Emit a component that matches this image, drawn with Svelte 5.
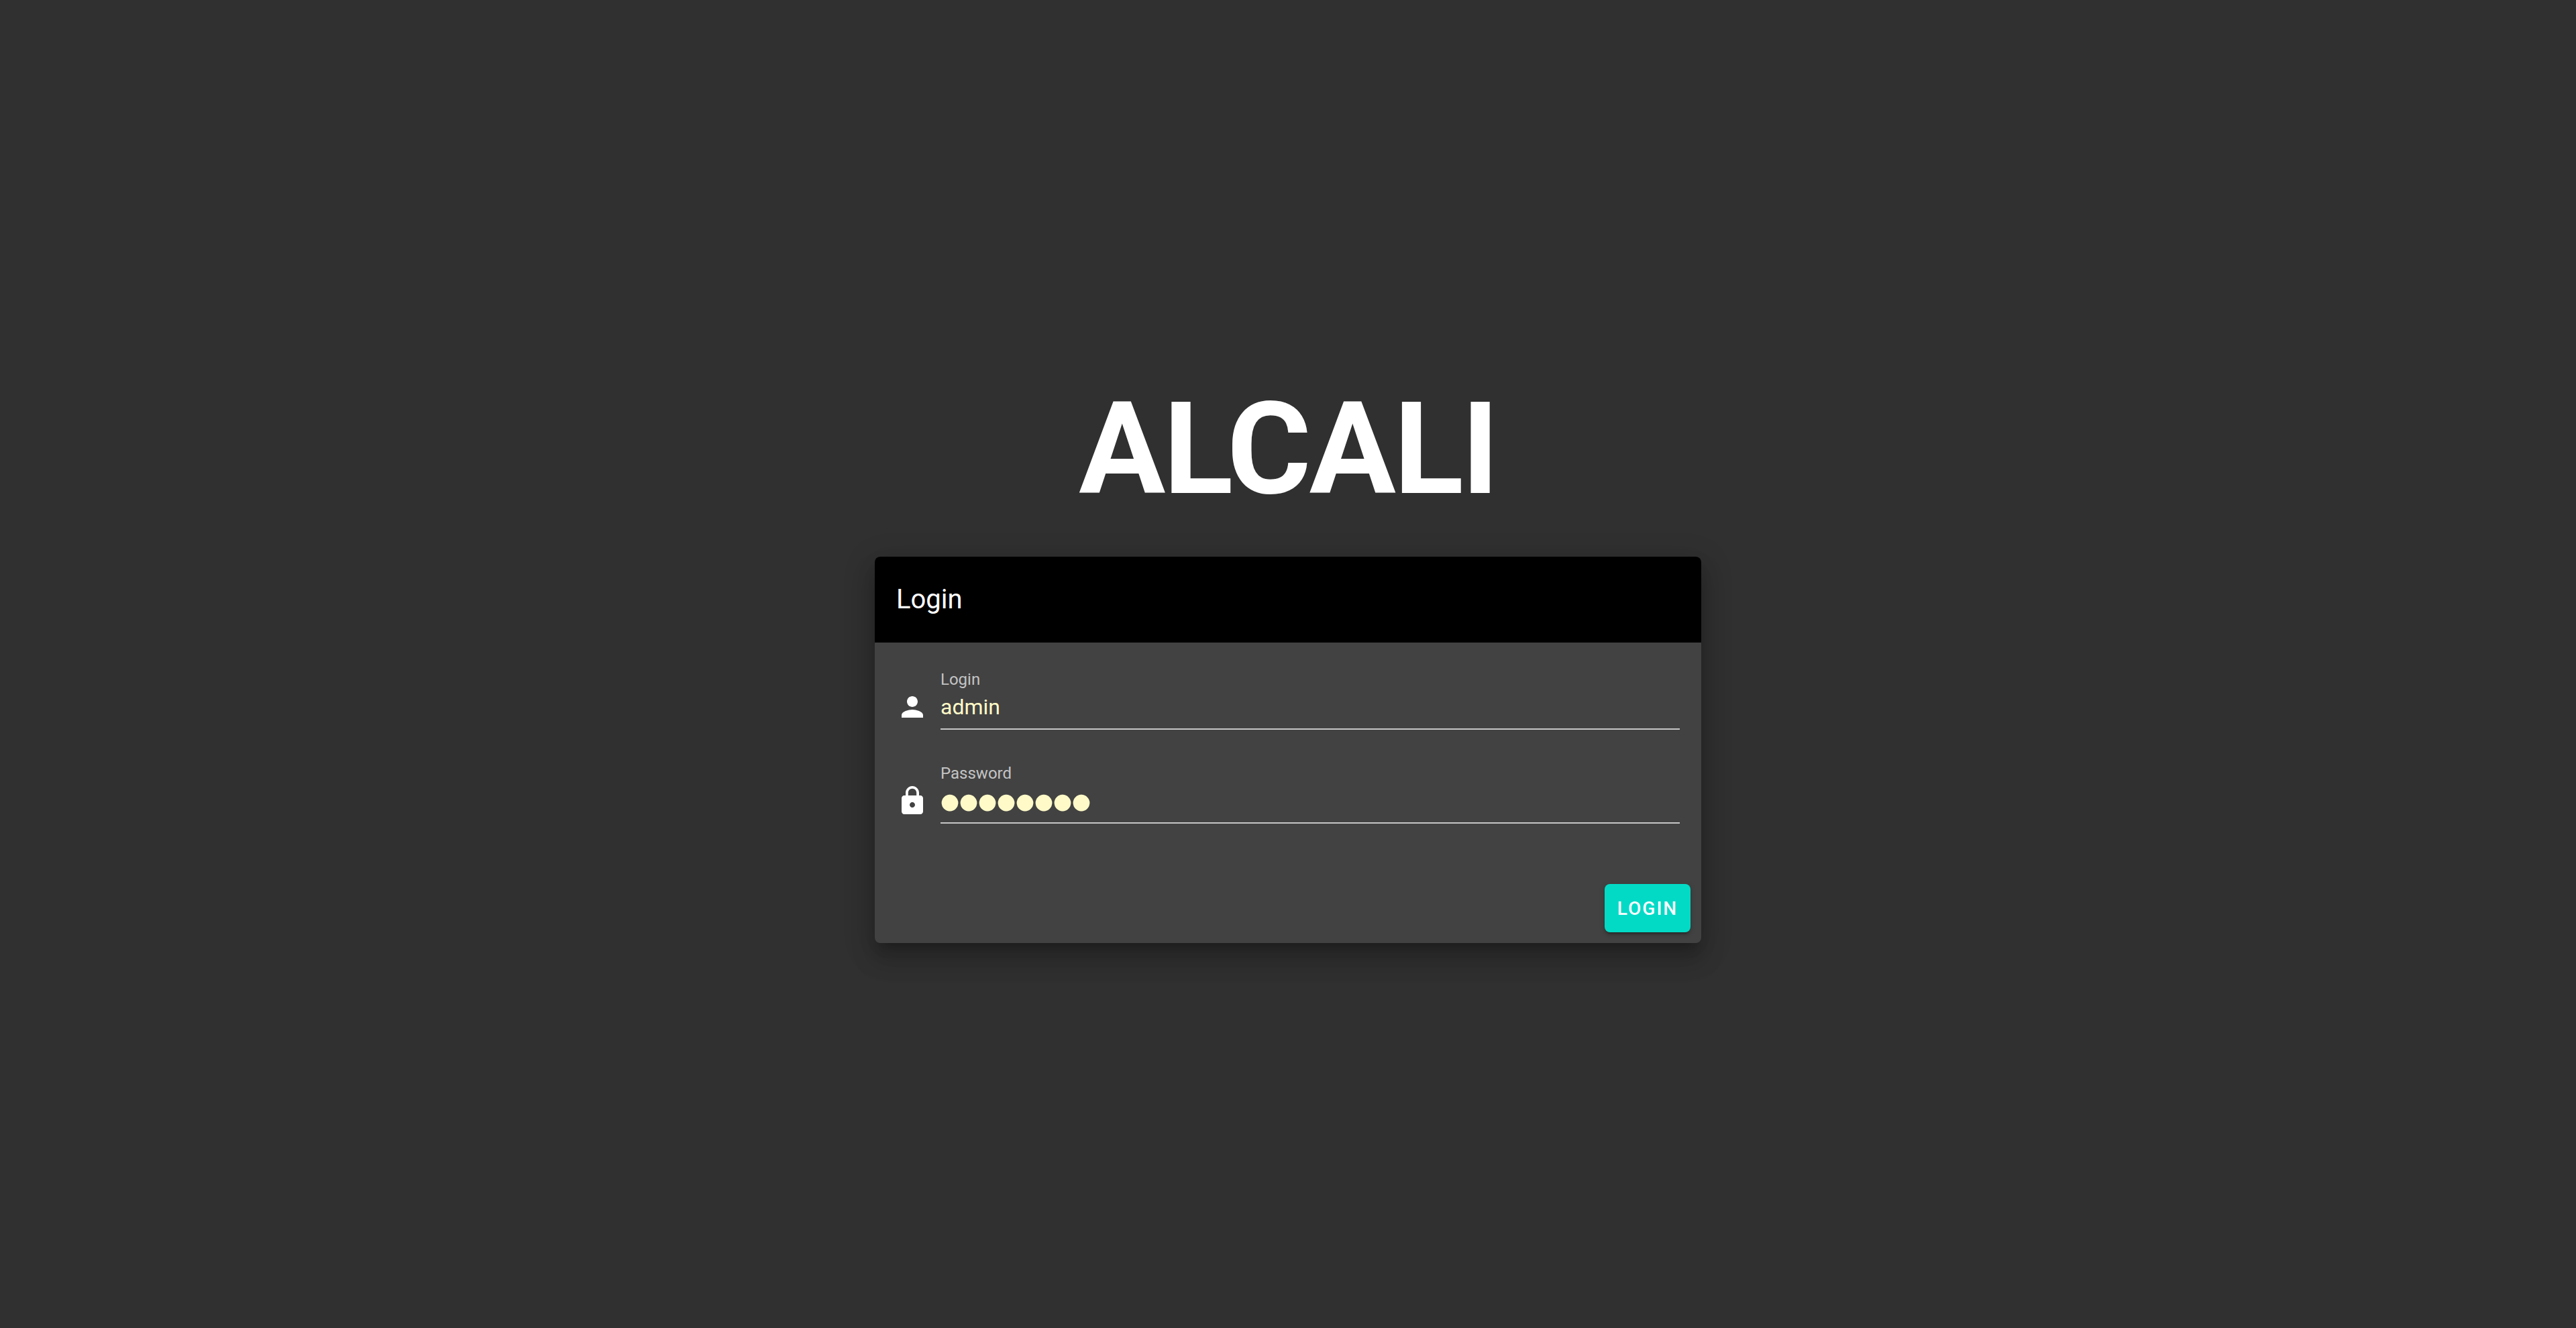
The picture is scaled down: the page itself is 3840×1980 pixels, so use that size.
<script>
  let login = $state('admin');
  let password = $state('password');
</script>

<main class="page">
  <div class="column">
    <h1 class="brand">ALCALI</h1>

    <form class="card" onsubmit={(event) => event.preventDefault()}>
      <header class="toolbar">
        <h2 class="toolbar-title">Login</h2>
      </header>

      <div class="fields">
        <div class="field">
          <svg class="icon" viewBox="0 0 24 24" aria-hidden="true">
            <path d="M12 12c2.21 0 4-1.79 4-4s-1.79-4-4-4-4 1.79-4 4 1.79 4 4 4zm0 2c-2.67 0-8 1.34-8 4v2h16v-2c0-2.66-5.33-4-8-4z" />
          </svg>
          <div class="control">
            <label class="label" for="login">Login</label>
            <input class="input" id="login" type="text" autocomplete="off" spellcheck="false" bind:value={login} />
          </div>
        </div>

        <div class="field">
          <svg class="icon" viewBox="0 0 24 24" aria-hidden="true">
            <path d="M18 8h-1V6c0-2.76-2.24-5-5-5S7 3.24 7 6v2H6c-1.1 0-2 .9-2 2v10c0 1.1.9 2 2 2h12c1.1 0 2-.9 2-2V10c0-1.1-.9-2-2-2zm-6 9c-1.1 0-2-.9-2-2s.9-2 2-2 2 .9 2 2-.9 2-2 2zm3.1-9H8.9V6c0-1.71 1.39-3.1 3.1-3.1 1.71 0 3.1 1.39 3.1 3.1v2z" />
          </svg>
          <div class="control">
            <label class="label" for="password">Password</label>
            <input class="input secret" id="password" type="password" autocomplete="off" bind:value={password} />
          </div>
        </div>
      </div>

      <footer class="actions">
        <button class="submit" type="submit">LOGIN</button>
      </footer>
    </form>
  </div>
</main>

<style>
  :global(body) {
    background: #303030;
  }

  .page {
    box-sizing: border-box;
    min-height: 100vh;
    display: flex;
    align-items: center;
    justify-content: center;
    font-family: Roboto, 'Liberation Sans', sans-serif;
    color: #fff;
    background: #303030;
  }

  .column {
    box-sizing: border-box;
    width: calc(100% / 3);
    min-width: 640px;
    padding: 0 24px;
    display: flex;
    flex-direction: column;
    gap: 64px;
  }

  .brand {
    margin: 0;
    font-size: 192px;
    line-height: 192px;
    font-weight: 700;
    letter-spacing: -3px;
    text-align: center;
  }

  .card {
    border-radius: 8px;
    background: #424242;
    box-shadow:
      0 14px 16px -8px rgba(0, 0, 0, 0.2),
      0 24px 34px 4px rgba(0, 0, 0, 0.14),
      0 10px 44px 8px rgba(0, 0, 0, 0.12);
  }

  .toolbar {
    display: flex;
    align-items: center;
    height: 128px;
    padding: 0 32px;
    border-radius: 8px 8px 0 0;
    background: #000;
  }

  .toolbar-title {
    margin: 0;
    font-size: 40px;
    line-height: 60px;
    font-weight: 400;
  }

  .fields {
    display: flex;
    flex-direction: column;
    gap: 50px;
    padding: 40px 32px 74px;
  }

  .field {
    display: flex;
    align-items: flex-end;
    gap: 18px;
  }

  .icon {
    flex: none;
    width: 48px;
    height: 48px;
    margin-bottom: 10px;
    fill: #fff;
  }

  .control {
    flex: 1;
    min-width: 0;
    display: flex;
    flex-direction: column;
    border-bottom: 2px solid rgba(255, 255, 255, 0.7);
  }

  .label {
    font-size: 24px;
    line-height: 30px;
    color: rgba(255, 255, 255, 0.7);
  }

  .input {
    box-sizing: border-box;
    width: 100%;
    height: 58px;
    margin: 0;
    padding: 4px 0 10px;
    border: 0;
    outline: 0;
    background: transparent;
    font: inherit;
    font-size: 32px;
    color: #fffac8;
  }

  /* Large, closely set masking dots */
  .secret {
    padding: 7px 0;
    font-family: 'Liberation Sans', Arial, sans-serif;
    font-size: 80px;
    -webkit-text-stroke: 3px #fffac8;
  }

  .actions {
    display: flex;
    justify-content: flex-end;
    padding: 16px;
  }

  .submit {
    min-width: 128px;
    height: 72px;
    padding: 0 16px;
    border: 0;
    border-radius: 8px;
    background: #03dac6;
    color: #fff;
    font: inherit;
    font-size: 28px;
    font-weight: 500;
    letter-spacing: 2px;
    cursor: pointer;
    box-shadow:
      0 6px 2px -4px rgba(0, 0, 0, 0.2),
      0 4px 4px 0 rgba(0, 0, 0, 0.14),
      0 2px 10px 0 rgba(0, 0, 0, 0.12);
  }
</style>
